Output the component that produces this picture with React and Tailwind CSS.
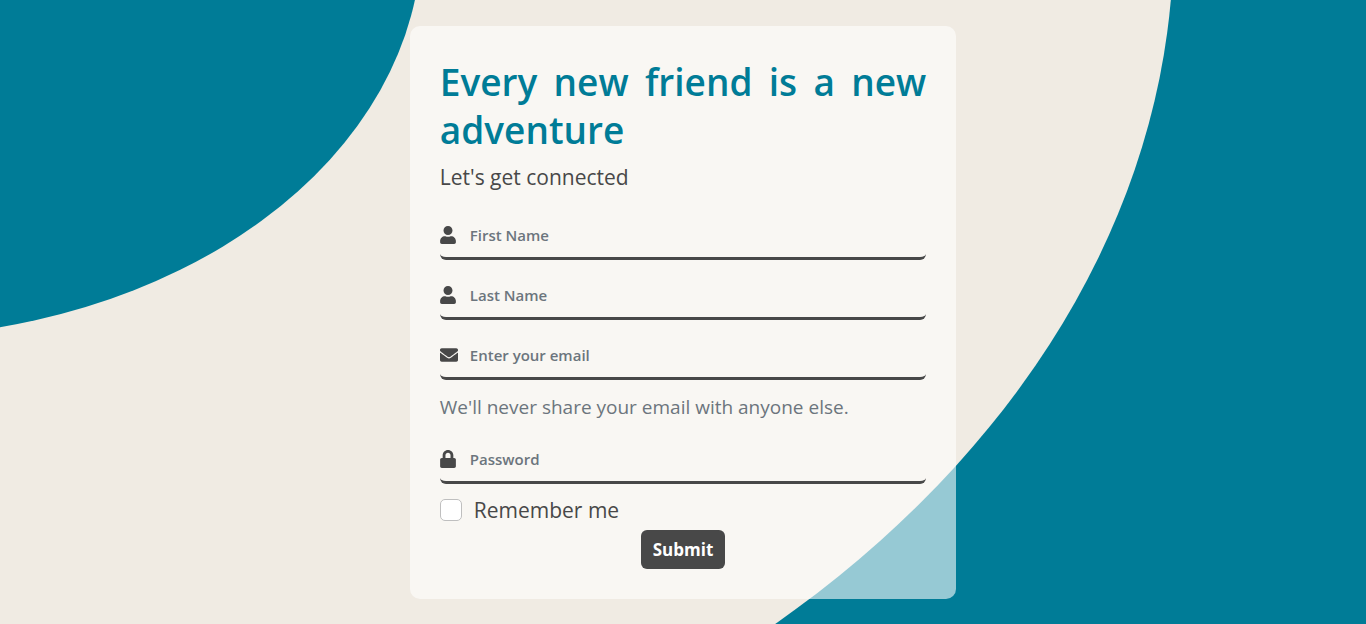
import React from "react";
import { FaUser, FaEnvelope, FaLock } from "react-icons/fa";

function Backdrop() {
  return (
    <svg
      className="absolute inset-0 h-full w-full"
      viewBox="0 0 1366 624"
      preserveAspectRatio="none"
      aria-hidden="true"
    >
      <rect width="1366" height="624" fill="#007c97" />
      <ellipse cx="-118" cy="-61" rx="1291.5" ry="948.4" fill="#f0ebe3" />
      <ellipse cx="-122.6" cy="-62.5" rx="544.2" ry="400" fill="#007c97" />
    </svg>
  );
}

function Field({ id, label, type, icon: Icon, iconWidth = "w-[16px]" }) {
  return (
    <div className="flex h-[50px] items-center rounded-md border-b-3 border-[#484848] pt-[3px]">
      <label htmlFor={id} aria-label={label} className="w-[30px] shrink-0">
        <Icon className={`h-[18px] ${iconWidth}`} />
      </label>
      <input
        id={id}
        type={type}
        placeholder={label}
        className="min-w-0 flex-1 bg-transparent text-[15px] leading-6 font-semibold outline-none placeholder:text-[#6c757d]"
      />
    </div>
  );
}

export default function App() {
  return (
    <main className="relative flex min-h-screen items-center justify-center overflow-hidden font-['Open_Sans','Noto_Sans',sans-serif] text-[#484848]">
      <Backdrop />
      <form
        className="relative w-2/5 rounded-[10px] bg-white/59 px-[30px] pt-8 pb-[30px]"
        onSubmit={(e) => e.preventDefault()}
      >
        <h1 className="text-justify text-[37px] leading-[48px] font-semibold text-[#007c97]">
          Every new friend is a new adventure
        </h1>
        <p className="mt-[7px] mb-4 text-[21px] leading-[33px]">Let's get connected</p>
        <div className="flex flex-col gap-[10px]">
          <Field id="first-name" label="First Name" type="text" icon={FaUser} />
          <Field id="last-name" label="Last Name" type="text" icon={FaUser} />
          <Field
            id="email"
            label="Enter your email"
            type="email"
            icon={FaEnvelope}
            iconWidth="w-[18px]"
          />
          <p className="my-1 text-[19px] leading-[26px] text-[#6c757d]">
            We'll never share your email with anyone else.
          </p>
          <Field id="password" label="Password" type="password" icon={FaLock} />
          <div className="flex items-center gap-3">
            <input
              id="remember"
              type="checkbox"
              className="size-[22px] appearance-none rounded-[5px] border border-[#bfbfbf] bg-white checked:bg-[#007c97]"
            />
            <label htmlFor="remember" className="text-[21px] leading-[33px]">
              Remember me
            </label>
          </div>
        </div>
        <div className="mt-[3px] flex justify-center">
          <button
            type="submit"
            className="rounded-md bg-[#484848] px-3 py-[6px] text-[17px] leading-[27px] font-bold text-white"
          >
            Submit
          </button>
        </div>
      </form>
    </main>
  );
}
